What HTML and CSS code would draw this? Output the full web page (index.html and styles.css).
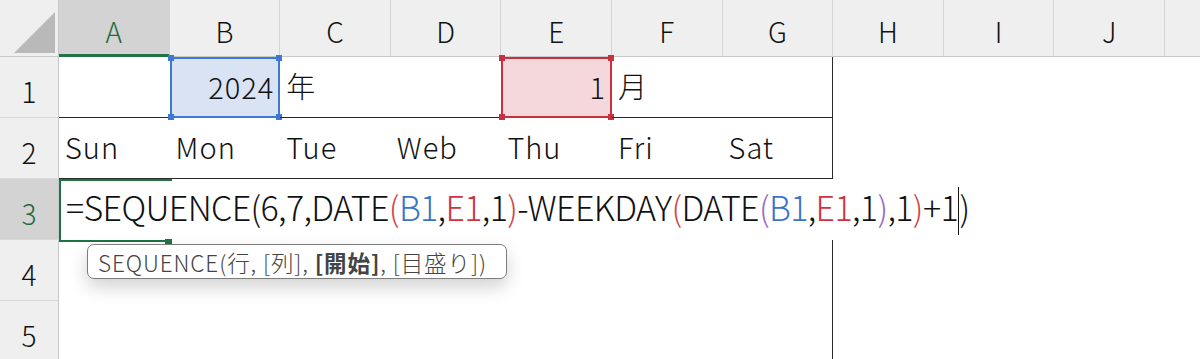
FILE: index.html
```html
<!DOCTYPE html>
<html lang="ja">
<head>
<meta charset="utf-8">
<link rel="stylesheet" href="styles.css">
</head>
<body>
<div class="sheet">
  <div class="corner"><span class="tri"></span></div>
  <div class="ch sel">A</div>
  <div class="ch">B</div>
  <div class="ch">C</div>
  <div class="ch">D</div>
  <div class="ch">E</div>
  <div class="ch">F</div>
  <div class="ch">G</div>
  <div class="ch">H</div>
  <div class="ch">I</div>
  <div class="ch">J</div>
  <div class="ch last"></div>

  <div class="rh">1</div>
  <div class="c tb"></div>
  <div class="c tb ref-b num">2024<i class="h tl"></i><i class="h tr"></i><i class="h bl"></i><i class="h br"></i></div>
  <div class="c tb">年</div>
  <div class="c tb"></div>
  <div class="c tb ref-e num">1<i class="h tl"></i><i class="h tr"></i><i class="h bl"></i><i class="h br"></i></div>
  <div class="c tb">月</div>
  <div class="c tb edge"></div>
  <div class="c"></div><div class="c"></div><div class="c"></div><div class="c"></div>

  <div class="rh">2</div>
  <div class="c tb">Sun</div>
  <div class="c tb">Mon</div>
  <div class="c tb">Tue</div>
  <div class="c tb">Web</div>
  <div class="c tb">Thu</div>
  <div class="c tb">Fri</div>
  <div class="c tb edge">Sat</div>
  <div class="c"></div><div class="c"></div><div class="c"></div><div class="c"></div>

  <div class="rh sel">3</div>
  <div class="editor">
    <span class="active"><i class="fill"></i></span>
    <span class="formula">=SEQUENCE(6,7,DATE<span class="p2">(</span><span class="rb">B1</span>,<span class="re">E1</span>,1<span class="p2">)</span>-WEEKDAY<span class="p2">(</span>DATE<span class="p3">(</span><span class="rb">B1</span>,<span class="re">E1</span>,1<span class="p3">)</span>,1<span class="p2">)</span>+1<span class="caret"></span>)</span>
  </div>

  <div class="rh">4</div>
  <div class="c"></div><div class="c"></div><div class="c"></div><div class="c"></div><div class="c"></div><div class="c"></div>
  <div class="c edge"></div>
  <div class="c"></div><div class="c"></div><div class="c"></div><div class="c"></div>

  <div class="rh">5</div>
  <div class="c"></div><div class="c"></div><div class="c"></div><div class="c"></div><div class="c"></div><div class="c"></div>
  <div class="c edge"></div>
  <div class="c"></div><div class="c"></div><div class="c"></div><div class="c"></div>

  <div class="tip">SEQUENCE(行,&nbsp;[列],&nbsp;<b>[開始]</b>,&nbsp;[目盛り])</div>
</div>
</body>
</html>
```
FILE: styles.css
```css
* { box-sizing: border-box; }
html, body { margin: 0; padding: 0; background: #fff; }
body { width: 1200px; height: 359px; overflow: hidden; font-family: "Noto Sans CJK JP", "Noto Sans", sans-serif; font-weight: 300; color: #111; }

.sheet {
  position: relative;
  display: grid;
  grid-template-columns: 59px repeat(10, 110.6px) 1fr;
  grid-template-rows: 57px repeat(5, 61px);
  width: 1200px;
}

.corner {
  background: #efefef;
  border-right: 1px solid #c8c8c8;
  border-bottom: 1px solid #c8c8c8;
  display: flex;
  align-items: flex-end;
  justify-content: flex-end;
  padding: 0 3px 3px 0;
}
.tri {
  width: 41px; height: 41px;
  background: #b9b9b9;
  clip-path: polygon(100% 0, 100% 100%, 0 100%);
}

.ch {
  background: #efefef;
  border-right: 1px solid #d4d4d4;
  border-bottom: 1px solid #c8c8c8;
  display: flex; align-items: center; justify-content: center;
  padding-top: 6px;
  font-size: 28px;
  color: #111;
}
.ch.sel { background: #d3d3d3; color: #1f6b40; border-bottom: 3px solid #217346; padding-top: 8px; }
.ch.last { border-right: none; }

.rh {
  background: #efefef;
  border-right: 1px solid #c8c8c8;
  border-bottom: 1px solid #d9d9d9;
  display: flex; align-items: center; justify-content: center;
  padding-top: 8px;
  font-size: 28px;
  color: #111;
}
.rh.sel { background: #d3d3d3; color: #1f6b40; }

.c {
  display: flex; align-items: center;
  padding: 0 6px 4px;
  font-size: 29px;
  letter-spacing: 1px;
  white-space: nowrap;
  position: relative;
}
.c.tb { border-bottom: 1px solid #2a2a2a; }
.c.edge { border-right: 1px solid #2a2a2a; }
.c.num { justify-content: flex-end; padding-right: 4px; }

.ref-b { background: #dae3f3; border: 2px solid #3f78d0 !important; }
.ref-e { background: #f5d8dc; border: 2px solid #c6323f !important; }
.h { position: absolute; width: 6px; height: 6px; }
.ref-b .h { background: #3f78d0; }
.ref-e .h { background: #c6323f; }
.h.tl { left: -4px; top: -4px; }
.h.tr { right: -4px; top: -4px; }
.h.bl { left: -4px; bottom: -4px; }
.h.br { right: -4px; bottom: -4px; }

.editor {
  grid-column: 2 / -1;
  position: relative;
  background: #fff;
  display: flex; align-items: center;
  padding-left: 7px;
}
.active {
  position: absolute;
  left: 0; top: 0;
  width: 113px; height: 63px;
  border: 2px solid #217346;
  border-right: none;
}
.fill {
  position: absolute;
  right: 0; bottom: -4px;
  width: 7px; height: 5px;
  background: #217346;
}
.formula {
  font-size: 34px;
  letter-spacing: -0.65px;
  white-space: nowrap;
  color: #111;
  position: relative;
  top: -1px;
}
.rb { color: #3b74c8; }
.re { color: #cf3340; }
.p2 { color: #d0454b; }
.p3 { color: #9a68cc; }
.caret {
  display: inline-block;
  width: 1.5px; height: 48px;
  background: #111;
  vertical-align: middle;
}

.tip {
  position: absolute;
  left: 87px; top: 244px;
  width: 420px; height: 35px;
  border: 1px solid #7d7d7d;
  border-radius: 7px;
  background: #fff;
  box-shadow: 0 8px 18px rgba(0,0,0,0.18);
  font-size: 22.5px;
  font-weight: 300;
  color: #444;
  display: flex; align-items: center;
  padding-left: 10px;
  white-space: nowrap;
  letter-spacing: 0.9px;
}
.tip b { font-weight: 700; color: #444; }
```
